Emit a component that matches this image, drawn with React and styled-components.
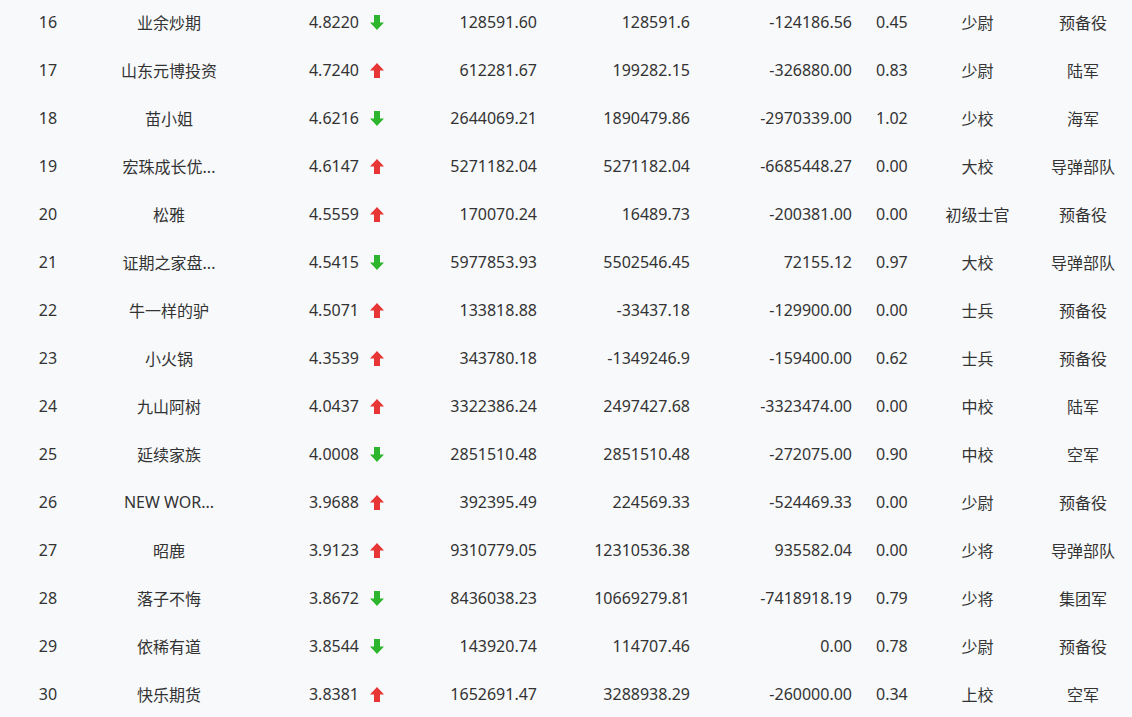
import React from 'react';
import styled, { createGlobalStyle } from 'styled-components';

const GlobalStyle = createGlobalStyle`
  html, body {
    margin: 0;
    padding: 0;
    background: #f8f9fb;
    overflow: hidden;
  }
`;

const Table = styled.div`
  width: 1132px;
  margin-top: -2px;
  font-family: "Noto Sans", "Noto Sans CJK SC", sans-serif;
  font-size: 16px;
  color: #333333;
`;

const Row = styled.div`
  display: grid;
  grid-template-columns: 96px 146px 150px 153px 153px 162px 61px 113px 98px;
  height: 48px;
  align-items: center;
`;

const Cell = styled.div`
  text-align: ${(props) => props.align || 'center'};
  padding: ${(props) => props.pad || '0'};
  white-space: nowrap;
  overflow: hidden;
`;

const ValueCell = styled.div`
  display: flex;
  justify-content: flex-end;
  align-items: center;
  gap: 11px;
  padding-right: 8px;
`;

const ArrowIcon = styled.svg`
  width: 14px;
  height: 15px;
  flex-shrink: 0;
`;

const Arrow = ({ up }) => (
  <ArrowIcon viewBox="0 0 14 15">
    {up ? (
      <path d="M7 0 L14 7.5 L10 7.5 L10 15 L4 15 L4 7.5 L0 7.5 Z" fill="#e83535" />
    ) : (
      <path d="M4 0 L10 0 L10 7.5 L14 7.5 L7 15 L0 7.5 L4 7.5 Z" fill="#2db52d" />
    )}
  </ArrowIcon>
);

const rows = [
  ['16', '业余炒期', '4.8220', false, '128591.60', '128591.6', '-124186.56', '0.45', '少尉', '预备役'],
  ['17', '山东元博投资', '4.7240', true, '612281.67', '199282.15', '-326880.00', '0.83', '少尉', '陆军'],
  ['18', '苗小姐', '4.6216', false, '2644069.21', '1890479.86', '-2970339.00', '1.02', '少校', '海军'],
  ['19', '宏珠成长优...', '4.6147', true, '5271182.04', '5271182.04', '-6685448.27', '0.00', '大校', '导弹部队'],
  ['20', '松雅', '4.5559', true, '170070.24', '16489.73', '-200381.00', '0.00', '初级士官', '预备役'],
  ['21', '证期之家盘...', '4.5415', false, '5977853.93', '5502546.45', '72155.12', '0.97', '大校', '导弹部队'],
  ['22', '牛一样的驴', '4.5071', true, '133818.88', '-33437.18', '-129900.00', '0.00', '士兵', '预备役'],
  ['23', '小火锅', '4.3539', true, '343780.18', '-1349246.9', '-159400.00', '0.62', '士兵', '预备役'],
  ['24', '九山阿树', '4.0437', true, '3322386.24', '2497427.68', '-3323474.00', '0.00', '中校', '陆军'],
  ['25', '延续家族', '4.0008', false, '2851510.48', '2851510.48', '-272075.00', '0.90', '中校', '空军'],
  ['26', 'NEW WOR...', '3.9688', true, '392395.49', '224569.33', '-524469.33', '0.00', '少尉', '预备役'],
  ['27', '昭鹿', '3.9123', true, '9310779.05', '12310536.38', '935582.04', '0.00', '少将', '导弹部队'],
  ['28', '落子不悔', '3.8672', false, '8436038.23', '10669279.81', '-7418918.19', '0.79', '少将', '集团军'],
  ['29', '依稀有道', '3.8544', false, '143920.74', '114707.46', '0.00', '0.78', '少尉', '预备役'],
  ['30', '快乐期货', '3.8381', true, '1652691.47', '3288938.29', '-260000.00', '0.34', '上校', '空军'],
];

const App = () => (
  <>
    <GlobalStyle />
    <Table>
      {rows.map(([rank, name, score, up, equity, profit, withdraw, ratio, title, army]) => (
        <Row key={rank}>
          <Cell>{rank}</Cell>
          <Cell>{name}</Cell>
          <ValueCell>
            {score}
            <Arrow up={up} />
          </ValueCell>
          <Cell align="right" pad="0 8px 0 0">{equity}</Cell>
          <Cell align="right" pad="0 8px 0 0">{profit}</Cell>
          <Cell align="right" pad="0 8px 0 0">{withdraw}</Cell>
          <Cell align="left" pad="0 0 0 16px">{ratio}</Cell>
          <Cell>{title}</Cell>
          <Cell>{army}</Cell>
        </Row>
      ))}
    </Table>
  </>
);

export default App;
